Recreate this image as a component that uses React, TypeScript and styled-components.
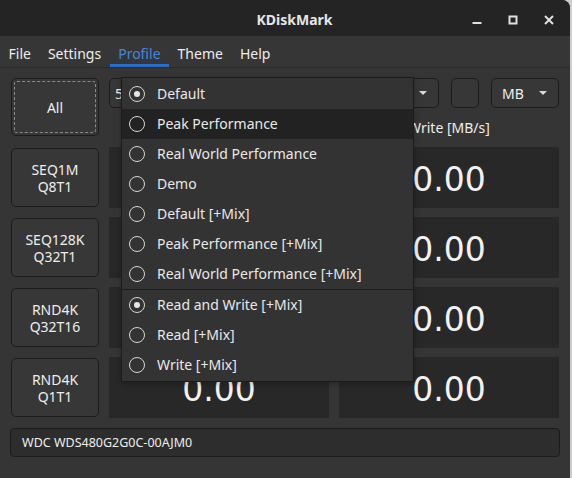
import React from 'react';
import styled, { createGlobalStyle } from 'styled-components';

const GlobalStyle = createGlobalStyle`
  html, body {
    margin: 0;
    padding: 0;
    background: #cfcfcf;
  }
`;

const Window = styled.div`
  position: relative;
  width: 570px;
  height: 478px;
  background: #353535;
  border-top-right-radius: 8px;
  overflow: hidden;
  font-family: "Noto Sans", "DejaVu Sans", sans-serif;
  color: #eeeeec;
`;

const TitleBar = styled.div`
  display: grid;
  grid-template-columns: 1fr auto 1fr;
  align-items: center;
  height: 36px;
  box-sizing: border-box;
  padding: 3px 0 0 19px;
  background: #242424;
`;

const Title = styled.div`
  grid-column: 2;
  font-size: 14px;
  font-weight: 700;
  color: #e6e6e6;
`;

const Controls = styled.div`
  grid-column: 3;
  justify-self: end;
  display: flex;
  gap: 26px;
  padding-right: 16px;

  svg {
    display: block;
  }
`;

const MenuBar = styled.div`
  display: flex;
  height: 31px;
  background: #363636;
  border-bottom: 1px solid #2b2b2b;
`;

const MenuItem = styled.div<{ $active?: boolean }>`
  display: flex;
  align-items: center;
  box-sizing: border-box;
  height: 31px;
  padding: 6px 8.5px 0;
  font-size: 14px;
  border-bottom: 3px solid ${(p) => (p.$active ? '#2a6dc8' : 'transparent')};
  color: ${(p) => (p.$active ? '#4088de' : '#eeeeec')};
`;

const Content = styled.div`
  display: grid;
  grid-template-columns: 88px 1fr 1fr;
  grid-template-rows: 30px 21px repeat(4, 61px) 30px;
  column-gap: 10px;
  row-gap: 9px;
  padding: 10px 11px 0;
`;

const TestButton = styled.div<{ $focus?: boolean }>`
  position: relative;
  display: flex;
  align-items: center;
  justify-content: center;
  text-align: center;
  box-sizing: border-box;
  margin: 1px 0;
  background: #373737;
  border: 1px solid #1c1c1c;
  border-radius: 5px;
  font-size: 14px;
  line-height: 17px;
  color: #eeeeec;

  ${(p) =>
    p.$focus &&
    `
    grid-row: 1 / span 2;
    align-self: start;
    height: 58px;
    margin: 0;
    &::after {
      content: '';
      position: absolute;
      inset: 2px;
      border: 1px dashed #8a8a8a;
      border-radius: 3px;
    }
  `}
`;

const ComboRow = styled.div`
  grid-column: 2 / span 2;
  display: flex;
  gap: 12px;
`;

const ComboGroup = styled.div`
  flex: 1;
  display: flex;
  gap: 10px;
`;

const Combo = styled.div<{ $width?: number; $padLeft?: number }>`
  display: flex;
  align-items: center;
  justify-content: space-between;
  box-sizing: border-box;
  ${(p) => (p.$width ? `width: ${p.$width}px;` : 'flex: 1;')}
  height: 30px;
  padding: 0 11px 0 ${(p) => p.$padLeft ?? 10}px;
  background: #373737;
  border: 1px solid #1c1c1c;
  border-radius: 5px;
  font-size: 14px;
  white-space: nowrap;
  overflow: hidden;
`;

const Arrow = styled.span`
  width: 0;
  height: 0;
  flex: none;
  margin-left: auto;
  border-left: 4px solid transparent;
  border-right: 4px solid transparent;
  border-top: 4px solid #d8d8d8;
`;

const ColumnLabel = styled.div<{ $column: number }>`
  grid-column: ${(p) => p.$column};
  display: flex;
  align-items: center;
  justify-content: center;
  font-size: 14px;
  color: #eeeeec;
`;

const ValueBox = styled.div`
  display: flex;
  align-items: center;
  justify-content: center;
  padding-top: 3px;
  background: #282828;
  font-family: "DejaVu Sans", sans-serif;
  font-size: 33px;
  color: #f2f2f2;
`;

const DeviceBar = styled.div`
  grid-column: 1 / -1;
  display: flex;
  align-items: center;
  margin: 1px -1px 0;
  padding-left: 11px;
  background: #2d2d2d;
  border: 1px solid #1c1c1c;
  border-radius: 4px;
  font-size: 12.5px;
  color: #eeeeec;
`;

const Popup = styled.div`
  position: absolute;
  left: 121px;
  top: 77px;
  width: 293px;
  box-sizing: border-box;
  padding: 1px 0;
  background: #333333;
  border: 1px solid #1c1c1c;
  box-shadow: 0 2px 6px rgba(0, 0, 0, 0.25);
`;

const PopupItem = styled.div<{ $hover?: boolean }>`
  display: flex;
  align-items: center;
  gap: 12px;
  height: 30px;
  padding: 0 0 1px 7px;
  box-sizing: border-box;
  background: ${(p) => (p.$hover ? '#222222' : 'transparent')};
  font-size: 14px;
  color: #e8e8e8;
`;

const Radio = styled.span<{ $checked?: boolean }>`
  position: relative;
  width: 16px;
  height: 16px;
  box-sizing: border-box;
  border: 1px solid #d6d6d6;
  border-radius: 50%;
  flex: none;

  ${(p) =>
    p.$checked &&
    `
    &::after {
      content: '';
      position: absolute;
      left: 4px;
      top: 4px;
      width: 6px;
      height: 6px;
      border-radius: 50%;
      background: #e6e6e6;
    }
  `}
`;

const Separator = styled.div`
  height: 1px;
  background: #1c1c1c;
`;

const tests = [
  ['SEQ1M', 'Q8T1'],
  ['SEQ128K', 'Q32T1'],
  ['RND4K', 'Q32T16'],
  ['RND4K', 'Q1T1'],
];

const profiles = [
  'Default',
  'Peak Performance',
  'Real World Performance',
  'Demo',
  'Default [+Mix]',
  'Peak Performance [+Mix]',
  'Real World Performance [+Mix]',
];

const modes = ['Read and Write [+Mix]', 'Read [+Mix]', 'Write [+Mix]'];

const App: React.FC = () => {
  return (
    <>
      <GlobalStyle />
      <Window>
        <TitleBar>
          <Title>KDiskMark</Title>
          <Controls>
            <svg width="10" height="10" viewBox="0 0 10 10">
              <rect x="0.5" y="7" width="9" height="2" fill="#e0e0e0" />
            </svg>
            <svg width="10" height="10" viewBox="0 0 10 10">
              <rect x="1.5" y="1.5" width="7" height="7" fill="none" stroke="#e0e0e0" strokeWidth="2" />
            </svg>
            <svg width="10" height="10" viewBox="0 0 10 10">
              <path d="M1 1 L9 9 M9 1 L1 9" stroke="#e0e0e0" strokeWidth="2" />
            </svg>
          </Controls>
        </TitleBar>

        <MenuBar>
          <MenuItem>File</MenuItem>
          <MenuItem>Settings</MenuItem>
          <MenuItem $active>Profile</MenuItem>
          <MenuItem>Theme</MenuItem>
          <MenuItem>Help</MenuItem>
        </MenuBar>

        <Content>
          <TestButton $focus>All</TestButton>
          <ComboRow>
            <ComboGroup>
              <Combo $width={50} $padLeft={5}>
                5
              </Combo>
              <Combo $width={90}>
                <Arrow />
              </Combo>
              <Combo>
                <Arrow />
              </Combo>
            </ComboGroup>
            <Combo $width={28} />
            <Combo $width={68}>
              MB <Arrow />
            </Combo>
          </ComboRow>

          <ColumnLabel $column={2}>Read [MB/s]</ColumnLabel>
          <ColumnLabel $column={3}>Write [MB/s]</ColumnLabel>

          {tests.map(([a, b]) => (
            <React.Fragment key={a + b}>
              <TestButton>
                {a}
                <br />
                {b}
              </TestButton>
              <ValueBox>0.00</ValueBox>
              <ValueBox>0.00</ValueBox>
            </React.Fragment>
          ))}

          <DeviceBar>WDC WDS480G2G0C-00AJM0</DeviceBar>
        </Content>

        <Popup>
          {profiles.map((name, i) => (
            <PopupItem key={name} $hover={i === 1}>
              <Radio $checked={i === 0} />
              {name}
            </PopupItem>
          ))}
          <Separator />
          {modes.map((name, i) => (
            <PopupItem key={name}>
              <Radio $checked={i === 0} />
              {name}
            </PopupItem>
          ))}
        </Popup>
      </Window>
    </>
  );
};

export default App;
